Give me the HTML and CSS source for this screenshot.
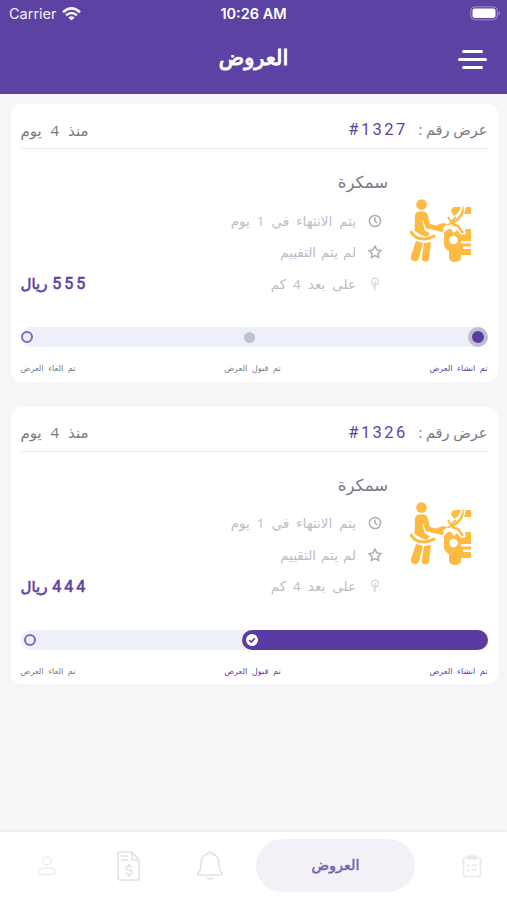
FILE: index.html
```html
<!DOCTYPE html>
<html lang="ar">
<head>
    <meta charset="UTF-8">
    <meta name="viewport" content="width=device-width, initial-scale=1.0">
    <title>العروض</title>
    <link rel="stylesheet" href="styles.css">
</head>
<body>
    <svg class="symbols">
        <symbol id="worker" viewBox="0 0 62 64">
            <g fill="#fdbb42">
                <circle cx="11.500" cy="5.500" r="5.300"/>
                <path d="M5 17Q5 12.500 10 12.500h3Q17 12.500 18 17l2 8 11 2.500q2.500 1 2 3.500-.7 2-3 1.500L17 29.500q-1.500-.4-2-2l-1.500-6-1 .3 2 9Q16 33 20 34l-3 4Q10 36 4.500 32z"/>
                <path d="M6 42l7 2-4 15q-1.500 4-5 3-4-1-3-5zM14 44l7-1-2 17q-1 3-4 2.500-4-.5-3-4.500zM27 26l6-2 4 1-4 4 1 3-4 1z"/>
                <path d="M34 34l4-4h3l3 4 3-3 4 5 5-1-1-5h6v12h-10v2.500h10v3h-8v2.500h8v6h-10v4q-2 3-6 3-5 0-6-4v-7q-4-2-5-6zM41 12q1-4 4-4h6l-3 6-4 3zM56 8h5v7h-7z"/>
            </g>
            <path d="M1 33Q5 40 14 40q5 0 10-3" fill="none" stroke="#fdbb42" stroke-width="3" stroke-linecap="round"/>
            <path d="M35 26Q45 22 48 18 52 14 53 6q2 6-1 11-4 7-13 9z" fill="#fdbb42"/>
            <path d="M38 18l3 5 5-5" fill="none" stroke="#fdbb42" stroke-width="2"/>
            <path d="M42 25l6 2 5 7" fill="none" stroke="#fdbb42" stroke-width="2.500"/>
            <circle cx="43.500" cy="41" r="4.300" fill="#fff"/>
        </symbol>
        <symbol id="clock" viewBox="0 0 14 14">
            <circle cx="7" cy="7" r="5.600"/><path d="M7 3.500V7l2.200 2"/>
        </symbol>
        <symbol id="star" viewBox="0 0 14 14">
            <path d="M7 1.200l1.800 3.700 4.100.6-3 2.900.7 4.100L7 10.600l-3.600 1.900.7-4.100-3-2.900 4.100-.6z"/>
        </symbol>
        <symbol id="pin" viewBox="0 0 14 14">
            <circle cx="7" cy="4.500" r="3.300"/><path d="M7 4v9.500M6 9l1 4"/>
        </symbol>
    </svg>
    <div class="header">
        <div class="status">
            <div class="carrier">
                <span>Carrier</span>
                <svg width="19" height="14" viewBox="0 0 19 14" fill="none" stroke="#fff" stroke-width="2.500">
                    <path d="M1 5.200Q9.500-2.500 18 5.200M4 8.300q5.500-4.600 11 0"/>
                    <path d="M9.500 13.500L6.300 10.400q3.200-2.400 6.400 0z" fill="#fff" stroke="none"/>
                </svg>
            </div>
            <div class="time">10:26 AM</div>
            <svg class="battery" width="31" height="15" viewBox="0 0 31 15">
                <rect x=".8" y=".8" width="26.500" height="13" rx="4" fill="none" stroke="#fff" stroke-opacity=".4"/>
                <rect x="2.500" y="2.500" width="23" height="9.600" rx="2.300" fill="#fff"/>
                <path d="M28.500 5q3 2.300 0 4.600z" fill="#fff" fill-opacity=".4"/>
            </svg>
        </div>
        <div class="title-bar">
            <div class="page-title">العروض</div>
            <div class="menu">
                <div class="menu-line short"></div>
                <div class="menu-line"></div>
                <div class="menu-line short"></div>
            </div>
        </div>
    </div>
    <div class="list">
        <div class="card">
            <div class="card-head">
                <div class="number">عرض رقم : <span class="number-value" dir="ltr">#1327</span></div>
                <div class="since">منذ 4 يوم</div>
            </div>
            <div class="card-body">
                <svg class="worker"><use href="#worker"/></svg>
                <div class="info">
                    <div class="service">سمكرة</div>
                    <div class="info-row"><svg class="info-icon"><use href="#clock"/></svg><span>يتم الانتهاء في 1 يوم</span></div>
                    <div class="info-row rating"><svg class="info-icon"><use href="#star"/></svg><span>لم يتم التقييم</span></div>
                    <div class="info-row"><svg class="info-icon pin"><use href="#pin"/></svg><span>على بعد 4 كم</span></div>
                </div>
                <div class="price"><span class="amount">555</span> ريال</div>
            </div>
            <div class="track">
                <div class="dot-current"></div>
                <div class="dot-next"></div>
                <div class="dot-last"></div>
            </div>
            <div class="labels">
                <div class="label active">تم انشاء العرض</div>
                <div class="label">تم قبول العرض</div>
                <div class="label">تم الغاء العرض</div>
            </div>
        </div>
        <div class="card">
            <div class="card-head">
                <div class="number">عرض رقم : <span class="number-value" dir="ltr">#1326</span></div>
                <div class="since">منذ 4 يوم</div>
            </div>
            <div class="card-body">
                <svg class="worker"><use href="#worker"/></svg>
                <div class="info">
                    <div class="service">سمكرة</div>
                    <div class="info-row"><svg class="info-icon"><use href="#clock"/></svg><span>يتم الانتهاء في 1 يوم</span></div>
                    <div class="info-row rating"><svg class="info-icon"><use href="#star"/></svg><span>لم يتم التقييم</span></div>
                    <div class="info-row"><svg class="info-icon pin"><use href="#pin"/></svg><span>على بعد 4 كم</span></div>
                </div>
                <div class="price"><span class="amount">444</span> ريال</div>
            </div>
            <div class="track accepted">
                <div class="fill">
                    <svg width="12" height="12" viewBox="0 0 12 12"><circle cx="6" cy="6" r="6" fill="#fff"/><path d="M3.200 6l2 2 3.800-3.800" fill="none" stroke="#5b3ba3" stroke-width="1.600"/></svg>
                </div>
                <div class="dot-last"></div>
            </div>
            <div class="labels">
                <div class="label active">تم انشاء العرض</div>
                <div class="label active">تم قبول العرض</div>
                <div class="label">تم الغاء العرض</div>
            </div>
        </div>
    </div>
    <div class="nav">
        <div class="nav-item">
            <svg width="20" height="24" viewBox="0 0 20 24" fill="none" stroke="#e9eaef" stroke-width="1.700">
                <rect x="1.500" y="3.500" width="17" height="19" rx="2"/>
                <path d="M6 5V2.500h2q2-2.500 4 0h2V5z" fill="#e9eaef"/>
                <path d="M5 11l1 1 2-2M10 11h5M5 16l1 1 2-2M10 16h5" stroke-width="1.300"/>
            </svg>
        </div>
        <div class="nav-active">العروض</div>
        <div class="nav-item bell">
            <svg width="28" height="30" viewBox="0 0 28 30" fill="none" stroke="#dfe1e8" stroke-width="1.600" stroke-linejoin="round">
                <path d="M12 3q0-2 2-2t2 2q7 1 7 10 0 7 3 9 1 2-1 2H3q-2 0-1-2 3-2 3-9 0-9 7-10zM11 26q3 4 6 0"/>
            </svg>
        </div>
        <div class="nav-item bill">
            <svg width="24" height="30" viewBox="0 0 24 30" fill="none" stroke="#dfe1e8" stroke-width="1.600" stroke-linejoin="round">
                <path d="M3 1h12l7 8v18q0 2-2 2H3q-2 0-2-2V3q0-2 2-2zM15 1v8h7M4 5h7M4 9h7"/>
                <path d="M15 17q-1-2-3-2-3 0-3 2 0 2 3 2t3 2.500q0 2-3 2-2 0-3-2M12 13v2m0 9v2"/>
            </svg>
        </div>
        <div class="nav-item person">
            <svg width="18" height="20" viewBox="0 0 18 20" fill="none" stroke="#edeef2" stroke-width="1.500">
                <circle cx="9" cy="5" r="4"/><path d="M3 18.500q-2 0-2-2Q2 12 6 12h6q4 0 5 4.500 0 2-2 2z"/>
            </svg>
        </div>
    </div>
</body>
</html>
```
FILE: styles.css
```css
body{
    display: flex;
    flex-direction: column;
    margin: 0;
    height: 900px;
    background-color: #f6f6f9;
    font-family: "Open Sans", "DejaVu Sans", sans-serif;
    color: #757b86;
    direction: rtl;
    overflow: hidden;
}
.symbols{
    display: none;
}
.header{
    height: 94px;
    flex-shrink: 0;
    background-color: #5c43a3;
    color: white;
}
.status{
    display: grid;
    grid-template-columns: 1fr auto 1fr;
    align-items: center;
    direction: ltr;
    height: 27px;
    padding: 0 6px 0 9px;
    font-family: Inter, sans-serif;
    font-size: 14.5px;
}
.carrier{
    display: flex;
    align-items: center;
    gap: 5px;
    opacity: .93;
}
.time{
    font-size: 14.5px;
    font-weight: 600;
    margin-right: 3px;
}
.battery{
    justify-self: end;
}
.title-bar{
    display: grid;
    grid-template-columns: 1fr auto 1fr;
    align-items: center;
    direction: ltr;
    height: 65px;
    padding-right: 20px;
}
.page-title{
    grid-column: 2;
    font-size: 21px;
    -webkit-text-stroke: 1px white;
    margin: 0 0 5px 20px;
}
.menu{
    justify-self: end;
    display: flex;
    flex-direction: column;
    align-items: center;
    gap: 5px;
    width: 29px;
}
.menu-line{
    width: 29px;
    height: 3px;
    border-radius: 2px;
    background-color: white;
}
.menu-line.short{
    width: 21px;
}
.list{
    flex: 1;
    padding: 10px 9.500px 0 10.500px;
}
.card{
    box-sizing: border-box;
    height: 277.500px;
    margin-bottom: 25px;
    padding: 0 10px;
    border-radius: 10px;
    background-color: white;
}
.card-head{
    box-sizing: border-box;
    display: flex;
    justify-content: space-between;
    align-items: center;
    height: 45px;
    padding-top: 7px;
    border-bottom: 1px solid #e6e6e9;
    font-size: 15px;
    white-space: nowrap;
}
.number{
    font-size: 14.5px;
}
.number-value{
    display: inline-block;
    color: #5c43a3;
    font-family: Roboto, sans-serif;
    font-size: 16.5px;
    letter-spacing: 2.400px;
    margin-right: 7px;
}
.since{
    word-spacing: 5px;
}
.card-body{
    display: flex;
    height: 178px;
}
.worker{
    width: 62px;
    height: 64px;
    margin: 50px 16px 0 21.500px;
}
.info{
    padding-top: 17px;
}
.service{
    height: 32px;
    line-height: 32px;
    font-size: 16.5px;
    margin-bottom: 7px;
}
.info-row{
    display: flex;
    align-items: center;
    gap: 12px;
    height: 31.500px;
    padding-right: 6px;
    font-size: 13.500px;
    word-spacing: 3.500px;
    color: #b9bec8;
    white-space: nowrap;
}
.info-row.rating{
    word-spacing: 1.500px;
}
.info-icon{
    width: 14px;
    height: 14px;
    fill: none;
    stroke: #a9adb5;
    stroke-width: 1.500;
}
.info-icon.pin{
    stroke: #d3d6da;
    stroke-width: 1.200;
}
.price{
    margin: 120px auto 0 0;
    line-height: 28px;
    font-size: 15px;
    -webkit-text-stroke: .6px #5c43a3;
    color: #5c43a3;
    white-space: nowrap;
}
.amount{
    display: inline-block;
    margin-left: 1px;
    font-family: Roboto, sans-serif;
    font-size: 16px;
    letter-spacing: 3px;
}
.track{
    display: flex;
    justify-content: space-between;
    align-items: center;
    height: 20px;
    border-radius: 10px;
    background-color: #edf0f9;
}
.dot-current{
    box-sizing: border-box;
    width: 20px;
    height: 20px;
    border: 4px solid #bdc0cd;
    border-radius: 50%;
    background-color: #5b3ba3;
}
.dot-next{
    width: 11px;
    height: 11px;
    border-radius: 50%;
    background-color: #bdc2cc;
    margin-right: 2px;
}
.dot-last{
    box-sizing: border-box;
    width: 12px;
    height: 12px;
    border: 2px solid #8068ba;
    border-radius: 50%;
}
.accepted .dot-last{
    margin-left: 3px;
}
.fill{
    box-sizing: border-box;
    display: flex;
    justify-content: flex-end;
    align-items: center;
    width: 246px;
    height: 20px;
    padding-left: 4px;
    border-radius: 10px;
    background-color: #5b3ba3;
}
.labels{
    display: flex;
    justify-content: space-between;
    padding-top: 11px;
    font-size: 8.200px;
    line-height: 20px;
    word-spacing: 2.400px;
}
.label.active{
    color: #5c43a3;
}
.nav{
    display: flex;
    align-items: center;
    height: 68px;
    flex-shrink: 0;
    background-color: white;
    box-shadow: 0 -1px 3px rgba(0, 0, 0, .06);
}
.nav-item{
    display: flex;
    justify-content: center;
    width: 70px;
}
.nav-active{
    width: 159px;
    height: 53px;
    margin: -1px 22px 0 11.500px;
    border-radius: 27px;
    background-color: #f2f1f8;
    color: #7862b0;
    font-size: 14.500px;
    -webkit-text-stroke: .5px #7862b0;
    line-height: 51px;
    text-align: center;
}
.bill{
    margin: 0 11px 0 12px;
}
```
